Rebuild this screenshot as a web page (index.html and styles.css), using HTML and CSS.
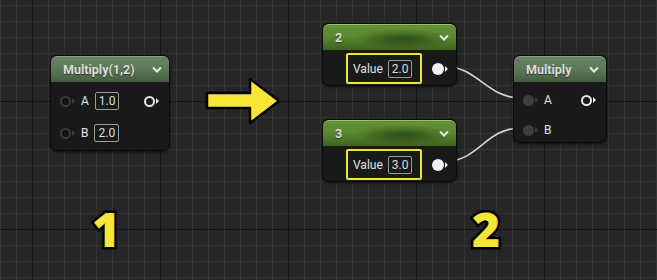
FILE: index.html
```html
<!DOCTYPE html>
<html>
<head>
  <title>Blueprint graph</title>
  <link rel="stylesheet" href="styles.css">
</head>
<body>
<div class="graph">
  <svg class="wires" width="657" height="280" viewBox="0 0 657 280">
    <path d="M442 66 C 478 66, 486 98, 521 98"/>
    <path d="M442 162 C 480 162, 484 128, 521 128"/>
  </svg>

  <svg class="arrow" width="657" height="280" viewBox="0 0 657 280">
    <polygon points="207,93 250,93 250,79 279,101 250,123 250,108 207,108"/>
  </svg>

  <!-- step 1: collapsed node with literal inputs -->
  <div class="node n1">
    <div class="head head-pure">
      <span class="title">Multiply(1,2)</span>
      <svg class="chev" width="10" height="7" viewBox="0 0 10 7"><polyline points="1,1.5 5,5.5 9,1.5"/></svg>
    </div>
    <div class="body rows">
      <div class="row">
        <span class="pin pin-in"></span><span class="tri tri-dim"></span>
        <span class="label">A</span>
        <span class="val">1.0</span>
        <span class="out">
          <span class="pin pin-out"></span><span class="tri"></span>
        </span>
      </div>
      <div class="row">
        <span class="pin pin-in"></span><span class="tri tri-dim"></span>
        <span class="label">B</span>
        <span class="val">2.0</span>
      </div>
    </div>
  </div>

  <!-- step 2: constants wired into multiply -->
  <div class="node n2">
    <div class="head head-const">
      <span class="title">2</span>
      <svg class="chev" width="10" height="7" viewBox="0 0 10 7"><polyline points="1,1.5 5,5.5 9,1.5"/></svg>
    </div>
    <div class="body const">
      <div class="field">
        <span class="label">Value</span>
        <span class="val">2.0</span>
      </div>
      <span class="pin pin-full"></span><span class="tri"></span>
    </div>
  </div>

  <div class="node n3">
    <div class="head head-const">
      <span class="title">3</span>
      <svg class="chev" width="10" height="7" viewBox="0 0 10 7"><polyline points="1,1.5 5,5.5 9,1.5"/></svg>
    </div>
    <div class="body const">
      <div class="field">
        <span class="label">Value</span>
        <span class="val">3.0</span>
      </div>
      <span class="pin pin-full"></span><span class="tri"></span>
    </div>
  </div>

  <div class="node n4">
    <div class="head head-pure">
      <span class="title">Multiply</span>
      <svg class="chev" width="10" height="7" viewBox="0 0 10 7"><polyline points="1,1.5 5,5.5 9,1.5"/></svg>
    </div>
    <div class="body rows rows-tight">
      <div class="row">
        <span class="pin pin-linked"></span><span class="tri tri-dim"></span>
        <span class="label">A</span>
        <span class="out">
          <span class="pin pin-out"></span><span class="tri"></span>
        </span>
      </div>
      <div class="row">
        <span class="pin pin-linked"></span><span class="tri tri-dim"></span>
        <span class="label">B</span>
      </div>
    </div>
  </div>

  <div class="step step1">1</div>
  <div class="step step2">2</div>
</div>
</body>
</html>
```

FILE: styles.css
```css
body {
  margin: 0;
  padding: 0;
  background: #262626;
  font-family: Roboto, "Liberation Sans", sans-serif;
}

.graph {
  position: relative;
  width: 657px;
  height: 280px;
  overflow: hidden;
  background:
    linear-gradient(to right, #151515 1px, transparent 1px) 32px 0 / 128px 128px,
    linear-gradient(to bottom, #151515 1px, transparent 1px) 0 101px / 128px 128px,
    linear-gradient(to right, #343434 1px, transparent 1px) 0 0 / 16px 16px,
    linear-gradient(to bottom, #343434 1px, transparent 1px) 0 5px / 16px 16px,
    #262626;
}

.wires, .arrow {
  position: absolute;
  left: 0;
  top: 0;
}

.wires path {
  fill: none;
  stroke: #d6d6d6;
  stroke-width: 1.6;
}

.arrow polygon {
  fill: #f9e637;
  stroke: #000;
  stroke-width: 2.5;
  stroke-linejoin: round;
}

.node {
  position: absolute;
  box-sizing: border-box;
  background: #181a18;
  border: 1px solid #0b0b0b;
  border-radius: 7px;
  box-shadow: 0 1px 3px rgba(0, 0, 0, 0.6);
}

.n1 { left: 50px; top: 55px; width: 120px; height: 96px; }
.n2 { left: 322px; top: 23px; width: 135px; height: 63px; }
.n3 { left: 322px; top: 119px; width: 135px; height: 63px; }
.n4 { left: 513px; top: 55px; width: 94px; height: 88px; }

.head {
  height: 25px;
  display: flex;
  align-items: center;
  justify-content: space-between;
  padding: 0 7px 0 12px;
  border-radius: 6px 6px 0 0;
  border-top: 1px solid #8aa584;
}

.head-pure {
  background:
    linear-gradient(to bottom, rgba(255, 255, 255, 0.06), rgba(0, 0, 0, 0) 45%, rgba(0, 0, 0, 0.25)),
    #5d7b59;
}

.head-const {
  border-top-color: #9cc06a;
  background:
    radial-gradient(ellipse 48px 10px at 60% 55%, rgba(20, 35, 10, 0.6), rgba(20, 35, 10, 0)),
    linear-gradient(to bottom, rgba(255, 255, 255, 0.05), rgba(0, 0, 0, 0) 45%, rgba(0, 0, 0, 0.3)),
    #5a8b2e;
}

.title {
  color: #dcdcdc;
  font-size: 12.5px;
  font-weight: 700;
  text-shadow: 0 1px 1px rgba(0, 0, 0, 0.5);
}

.chev polyline {
  fill: none;
  stroke: #e6e6e6;
  stroke-width: 2;
}

.rows {
  display: flex;
  flex-direction: column;
  gap: 10px;
  padding: 8px 10px 0 9px;
}

.rows-tight {
  gap: 8px;
  padding-top: 7px;
}

.row {
  display: flex;
  align-items: center;
  height: 22px;
}

.pin {
  display: inline-block;
  box-sizing: border-box;
  width: 11px;
  height: 11px;
  border-radius: 50%;
}

.pin-in {
  border: 2px solid #3b3b3b;
  background: #121212;
}

.pin-linked {
  background: #3e3e3e;
}

.pin-out {
  border: 2px solid #e8e8e8;
  background: #1a1a1a;
}

.pin-full {
  width: 12px;
  height: 12px;
  background: #f2f2f2;
}

.tri {
  display: inline-block;
  width: 0;
  height: 0;
  margin-left: 1px;
  border-top: 3px solid transparent;
  border-bottom: 3px solid transparent;
  border-left: 3px solid #e8e8e8;
}

.tri-dim {
  border-left-color: #3b3b3b;
}

.label {
  color: #e4e4e4;
  font-size: 12px;
  margin-left: 6px;
}

.val {
  box-sizing: border-box;
  height: 18px;
  line-height: 16px;
  padding: 0 3px;
  margin-left: 6px;
  border: 1px solid #9a9a9a;
  border-radius: 2px;
  color: #dedede;
  font-size: 12px;
}

.out {
  margin-left: auto;
  display: flex;
  align-items: center;
}

.const {
  display: flex;
  align-items: center;
  padding: 3px 0 0 23px;
}

.field {
  box-sizing: border-box;
  height: 31px;
  width: 76px;
  display: flex;
  align-items: center;
  border: 2px solid #f2e332;
  border-radius: 2px;
  margin-right: 10px;
}

.field .label {
  margin-left: 5px;
}

.field .val {
  margin-left: 5px;
}

.step {
  position: absolute;
  top: 196px;
  color: #f7e53a;
  font-family: "Open Sans", sans-serif;
  font-size: 48px;
  font-weight: 800;
  -webkit-text-stroke: 5px #000;
  paint-order: stroke fill;
}

.step1 { left: 92px; }
.step2 { left: 472px; }
```
